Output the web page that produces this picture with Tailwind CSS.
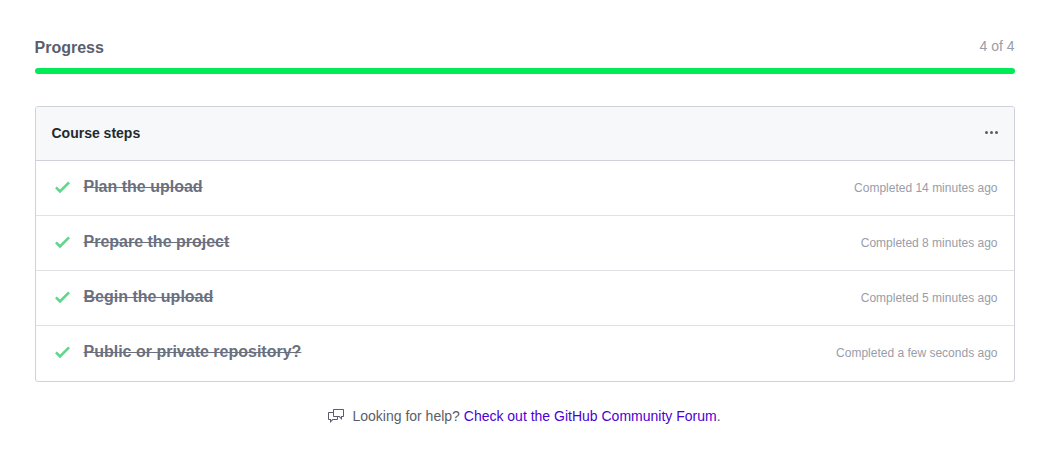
<!DOCTYPE html>
<html lang="en">
<head>
<meta charset="utf-8">
<meta name="viewport" content="width=device-width, initial-scale=1">
<title>Course progress</title>
<script src="https://cdn.jsdelivr.net/npm/@tailwindcss/browser@4"></script>
</head>
<body class="bg-white pr-7 pl-4 font-['Liberation_Sans',Arial,sans-serif] text-sm text-[#5a5e6c]">
<svg class="hidden" aria-hidden="true">
  <symbol id="check" viewBox="0 0 12 16"><path d="M12 5l-8 8-4-4 1.5-1.5L4 10l6.5-6.5L12 5z"/></symbol>
</svg>
<main class="mx-auto max-w-[980px] pt-9 pb-6">
  <div class="flex items-start justify-between">
    <h2 id="progress-label" class="text-base font-bold text-[#5a5e6c]">Progress</h2>
    <span class="text-sm text-[#999da8]">4 of 4</span>
  </div>
  <div role="progressbar" aria-labelledby="progress-label" aria-valuemin="0" aria-valuenow="4" aria-valuemax="4" class="mt-2 h-1.5 overflow-hidden rounded-[3px] bg-[#e1e4e8]">
    <div class="h-full bg-[#00eb56]" style="width:100%"></div>
  </div>

  <section class="mt-8 rounded-[3px] border border-[#d0d1d9] bg-white">
    <header class="flex h-[54px] items-center justify-between rounded-t-[2px] border-b border-[#d0d1d9] bg-[#f6f8fa] px-4 pb-0.5">
      <h3 class="text-sm font-bold text-[#24292e]">Course steps</h3>
      <button type="button" aria-label="Course options" class="text-[#5a5a68]">
        <svg class="block h-4 w-[13px]" viewBox="0 0 13 16" fill="currentColor"><path d="M1.5 9a1.5 1.5 0 1 0 0-3 1.5 1.5 0 0 0 0 3zm5 0a1.5 1.5 0 1 0 0-3 1.5 1.5 0 0 0 0 3zM13 7.500a1.500 1.500 0 1 1-3 0 1.500 1.500 0 0 1 3 0z"/></svg>
      </button>
    </header>
    <ol>
      <li class="flex h-[55px] items-center border-b border-[#e0e1e4] px-4">
        <svg class="mr-3.5 mb-0.5 ml-[3px] h-5 w-[15px] fill-[#62d68b]" aria-hidden="true"><use href="#check"/></svg>
        <h4 class="pb-0.5 text-base font-bold text-[#6a7080] line-through">Plan the upload</h4>
        <span class="ml-auto text-xs text-[#999da8]">Completed 14 minutes ago</span>
      </li>
      <li class="flex h-[55px] items-center border-b border-[#e0e1e4] px-4">
        <svg class="mr-3.5 mb-0.5 ml-[3px] h-5 w-[15px] fill-[#62d68b]" aria-hidden="true"><use href="#check"/></svg>
        <h4 class="pb-0.5 text-base font-bold text-[#6a7080] line-through">Prepare the project</h4>
        <span class="ml-auto text-xs text-[#999da8]">Completed 8 minutes ago</span>
      </li>
      <li class="flex h-[55px] items-center border-b border-[#e0e1e4] px-4">
        <svg class="mr-3.5 mb-0.5 ml-[3px] h-5 w-[15px] fill-[#62d68b]" aria-hidden="true"><use href="#check"/></svg>
        <h4 class="pb-0.5 text-base font-bold text-[#6a7080] line-through">Begin the upload</h4>
        <span class="ml-auto text-xs text-[#999da8]">Completed 5 minutes ago</span>
      </li>
      <li class="flex h-[55px] items-center border-b border-transparent px-4">
        <svg class="mr-3.5 mb-0.5 ml-[3px] h-5 w-[15px] fill-[#62d68b]" aria-hidden="true"><use href="#check"/></svg>
        <h4 class="pb-0.5 text-base font-bold text-[#6a7080] line-through">Public or private repository?</h4>
        <span class="ml-auto text-xs text-[#999da8]">Completed a few seconds ago</span>
      </li>
    </ol>
  </section>

  <p class="mt-6 flex items-center justify-center text-sm text-[#5a5e6c]">
    <svg class="mr-2 h-4 w-4" viewBox="0 0 16 16" fill="currentColor" aria-hidden="true"><path fill-rule="evenodd" d="M15 1H6c-.55 0-1 .45-1 1v2H1c-.55 0-1 .45-1 1v6c0 .55.45 1 1 1h1v3l3-3h4c.55 0 1-.45 1-1V9h1l3 3V9h1c.55 0 1-.45 1-1V2c0-.55-.45-1-1-1zM9 11H4.500L3 12.500V11H1V5h4v3c0 .55.45 1 1 1h3v2zm6-3h-2v1.500L11.500 8H6V2h9v6z"/></svg>
    <span>Looking for help? <a href="#forum" class="text-[#4c00d6]">Check out the GitHub Community Forum</a>.</span>
  </p>
</main>
</body>
</html>
